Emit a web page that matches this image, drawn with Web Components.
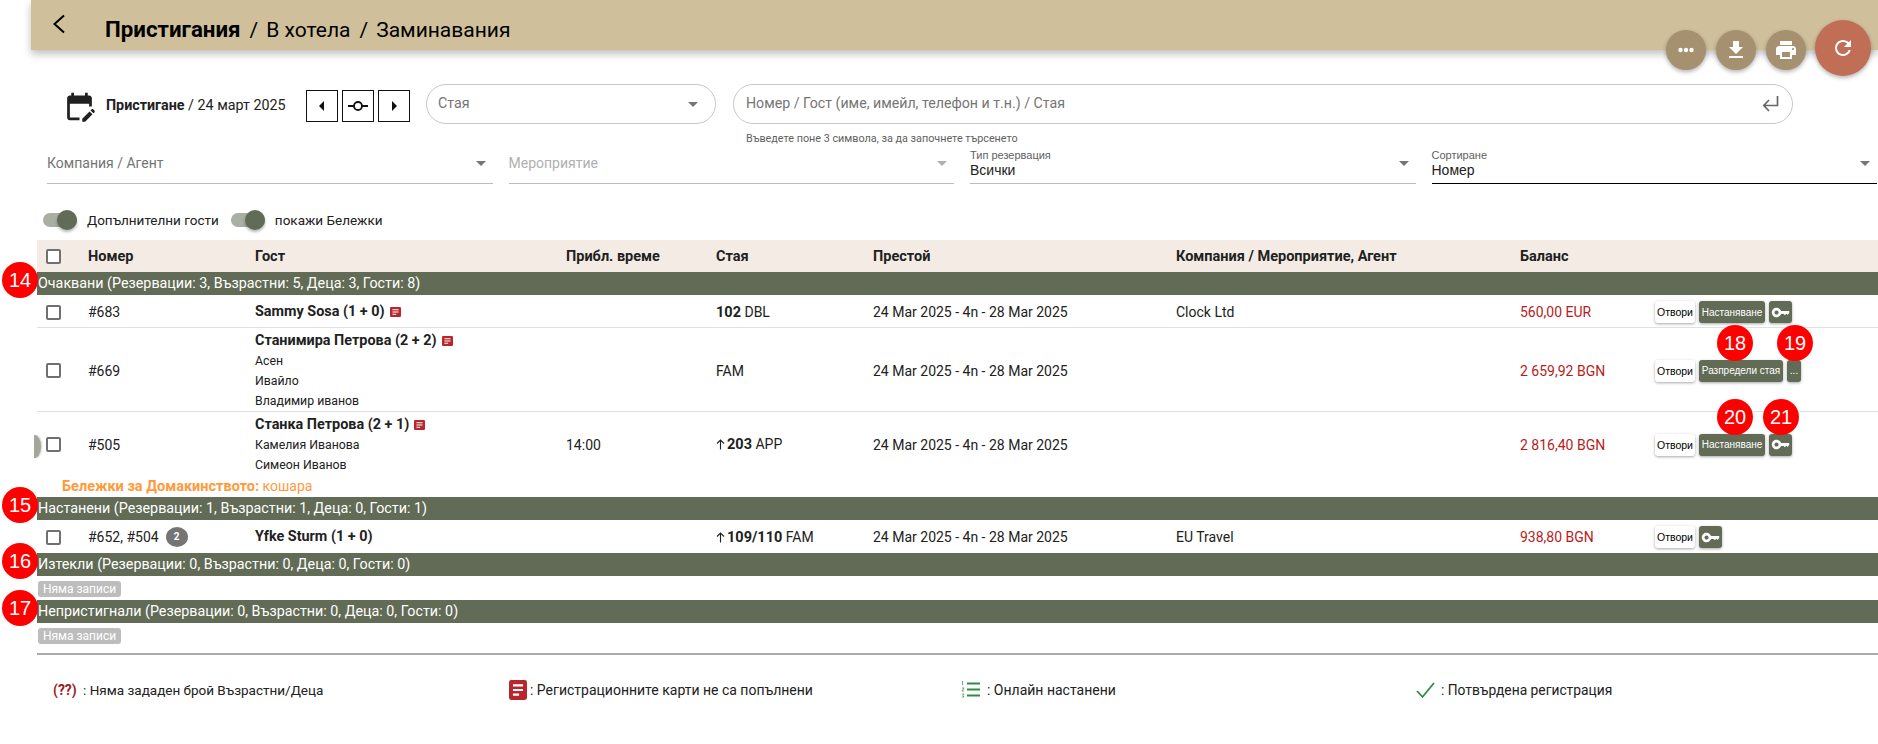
<!DOCTYPE html>
<html lang="bg">
<head>
<meta charset="utf-8">
<title>Пристигания</title>
<style>
	html, body { margin: 0; padding: 0; background: #fff; }
	body {
		font-family: Roboto, "Liberation Sans", sans-serif;
		font-size: 14px;
		color: #212121;
		overflow: hidden;
		width: 1878px;
		height: 744px;
		position: relative;
	}
</style>
</head>
<body>
<app-header>
	<b>Пристигания</b><i>/</i>В хотела<i>/</i>Заминавания
</app-header>

<fab-bar></fab-bar>

<filter-top></filter-top>

<filter-lines>
	<line-select placeholder="Компания / Агент"></line-select>
	<line-select placeholder="Мероприятие" disabled></line-select>
	<line-select label="Тип резервация" value="Всички"></line-select>
	<line-select label="Сортиране" value="Номер" active></line-select>
</filter-lines>

<toggle-bar>
	<toggle-switch>Допълнителни гости</toggle-switch>
	<toggle-switch>покажи Бележки</toggle-switch>
</toggle-bar>

<booking-table>
	<table-head></table-head>

	<group-row callout="14">Очаквани (Резервации: 3, Възрастни: 5, Деца: 3, Гости: 8)</group-row>
	<booking-row height="33" num="#683" name="Sammy Sosa (1 + 0)" reg room="<b>102</b> DBL" stay="24 Mar 2025 - 4n - 28 Mar 2025" company="Clock Ltd" balance="560,00 EUR" actions="open,checkin,key"></booking-row>
	<booking-row height="84" num="#669" name="Станимира Петрова (2 + 2)" reg guests="Асен|Ивайло|Владимир иванов" room="FAM" stay="24 Mar 2025 - 4n - 28 Mar 2025" balance="2 659,92 BGN" actions="open,assign,more" marks="18@80,19@140"></booking-row>
	<booking-row height="85" num="#505" name="Станка Петрова (2 + 1)" reg guests="Камелия Иванова|Симеон Иванов" time="14:00" arrow room="<b>203</b> APP" stay="24 Mar 2025 - 4n - 28 Mar 2025" balance="2 816,40 BGN" actions="open,checkin,key" marks="20@80,21@126" note="кошара" tab></booking-row>

	<group-row callout="15">Настанени (Резервации: 1, Възрастни: 1, Деца: 0, Гости: 1)</group-row>
	<booking-row height="33" flat num="#652, #504" count="2" name="Yfke Sturm (1 + 0)" arrow room="<b>109/110</b> FAM" stay="24 Mar 2025 - 4n - 28 Mar 2025" company="EU Travel" balance="938,80 BGN" actions="open,key"></booking-row>

	<group-row callout="16">Изтекли (Резервации: 0, Възрастни: 0, Деца: 0, Гости: 0)</group-row>
	<empty-row>Няма записи</empty-row>

	<group-row callout="17">Непристигнали (Резервации: 0, Възрастни: 0, Деца: 0, Гости: 0)</group-row>
	<empty-row>Няма записи</empty-row>
</booking-table>

<legend-bar></legend-bar>

<script>
const REG_ICON = (w, h) => `<svg width="${w}" height="${h}" viewBox="0 0 10 10" preserveAspectRatio="none" style="flex:none"><rect width="10" height="10" rx="1.2" fill="#b9252d"/><path d="M2.2 2.7h5.6M2.2 5h5.6M2.2 7.3h3.4" stroke="#fff" stroke-width="1.1"/></svg>`;
const KEY_ICON = `<svg width="19" height="19" viewBox="0 0 24 24" fill="#fff"><path d="M12.65 10C11.83 7.67 9.61 6 7 6c-3.31 0-6 2.69-6 6s2.69 6 6 6c2.61 0 4.83-1.67 5.65-4H16l1.5 1.6L19 14h1l1 1.2L23 12.6V10H12.65zM7 14.6c-1.43 0-2.6-1.17-2.6-2.6S5.57 9.400 7 9.400s2.6 1.170 2.600 2.600-1.170 2.600-2.600 2.600z"/></svg>`;

class AppHeader extends HTMLElement {
	constructor() {
		super();
		this.attachShadow({ mode: 'open' });
		this.shadowRoot.innerHTML = `
			<style>
				:host {
					display: flex;
					align-items: center;
					box-sizing: border-box;
					height: 50px;
					margin-left: 31px;
					padding: 7px 0 0 21px;
					background: #cfc09b;
					box-shadow: 0 4px 8px rgba(0,0,0,.25);
					color: #000;
					font-size: 21px;
				}
				svg { flex: none; margin: -9px 39px 0 0; }
				h1 { all: unset; display: block; white-space: nowrap; }
				::slotted(b) { font-weight: 700; font-size: 22.300px; }
				::slotted(i) { font-style: normal; margin: 0 8px 0 9px; }
			</style>
			<svg width="14" height="20" viewBox="0 0 14 20"><path d="M12 1.500 2.500 10 12 18.500" fill="none" stroke="#000" stroke-width="2"/></svg>
			<h1><slot></slot></h1>
		`;
	}
}

class FabBar extends HTMLElement {
	constructor() {
		super();
		this.attachShadow({ mode: 'open' });
		this.shadowRoot.innerHTML = `
			<style>
				:host {
					position: absolute;
					top: 20px;
					left: 1666px;
					display: flex;
					gap: 10px;
					align-items: flex-start;
					z-index: 3;
				}
				span {
					width: 40px;
					height: 40px;
					margin-top: 10px;
					border-radius: 50%;
					background: #a59070;
					box-shadow: 0 2px 4px rgba(0,0,0,.3);
					display: flex;
					align-items: center;
					justify-content: center;
				}
				span.big {
					width: 56px;
					height: 56px;
					margin: 0 0 0 -1px;
					background: #c06f56;
				}
				svg { fill: #fff; }
			</style>
			<span><svg width="24" height="24" viewBox="0 0 24 24"><circle cx="6.500" cy="12" r="2.200"/><circle cx="12" cy="12" r="2.200"/><circle cx="17.500" cy="12" r="2.200"/></svg></span>
			<span><svg width="24" height="24" viewBox="0 0 24 24"><path d="M19 9h-4V3H9v6H5l7 7 7-7zM5 18v2h14v-2H5z"/></svg></span>
			<span><svg width="24" height="24" viewBox="0 0 24 24"><path d="M19 8H5c-1.660 0-3 1.340-3 3v6h4v4h12v-4h4v-6c0-1.660-1.340-3-3-3zm-3 11H8v-5h8v5zm3-7c-.55 0-1-.45-1-1s.45-1 1-1 1 .45 1 1-.45 1-1 1zm-1-9H6v4h12V3z"/></svg></span>
			<span class="big"><svg width="24" height="24" viewBox="0 0 24 24"><path d="M17.650 6.350C16.200 4.900 14.210 4 12 4c-4.420 0-7.990 3.580-7.990 8s3.570 8 7.990 8c3.730 0 6.840-2.550 7.730-6h-2.080c-.82 2.330-3.040 4-5.650 4-3.310 0-6-2.690-6-6s2.690-6 6-6c1.660 0 3.140.69 4.220 1.780L13 11h7V4l-2.350 2.350z"/></svg></span>
		`;
	}
}

class FilterTop extends HTMLElement {
	constructor() {
		super();
		this.attachShadow({ mode: 'open' });
		this.shadowRoot.innerHTML = `
			<style>
				:host {
					display: flex;
					box-sizing: border-box;
					height: 96px;
					padding: 34px 0 0 63px;
					color: #212121;
				}
				.cal { width: 33px; height: 33px; margin: 6px 10px 0 0; fill: #212121; flex: none; }
				.date { font-size: 14.300px; line-height: 16px; margin: 13px 17px 0 0; white-space: nowrap; width: 183px; }
				.date b { font-weight: 700; }
				.nav { display: flex; gap: 4px; margin: 6px 16px 0 0; }
				.nav span {
					box-sizing: border-box;
					width: 32px;
					height: 32px;
					border: 1px solid #111;
					display: flex;
					align-items: center;
					justify-content: center;
				}
				.pill {
					box-sizing: border-box;
					height: 40px;
					border: 1px solid #c8c8c8;
					border-radius: 20px;
					display: flex;
					align-items: center;
					justify-content: space-between;
					font-size: 14.200px;
					color: #757575;
				}
				.room { width: 290px; padding: 0 17px 3px 11px; margin-right: 17px; }
				.caret { width: 0; height: 0; border: 5px solid transparent; border-top-color: #757575; border-bottom: 0; margin-top: 3px; }
				.search { width: 1060px; }
				.search .pill { padding: 0 13px 3px 12px; }
				.hint { font-size: 10.800px; line-height: 13px; margin: 8px 0 0 13px; color: #616161; }
			</style>
			<svg class="cal" viewBox="0 0 24 24"><path d="M5 10h14v2h2V6c0-1.100-.9-2-2-2h-1V2h-2v2H8V2H6v2H5c-1.110 0-1.990.9-1.990 2L3 20c0 1.100.89 2 2 2h7v-2H5V10zM22.840 16.280l-.71.71-2.120-2.120.71-.71c.39-.39 1.020-.39 1.410 0l.71.71c.39.39.39 1.020 0 1.410zM19.300 15.580l2.120 2.120-5.300 5.300H14v-2.120l5.300-5.300z"/></svg>
			<div class="date"><b>Пристигане</b> / 24 март 2025</div>
			<div class="nav">
				<span><svg width="8" height="12" viewBox="0 0 8 12"><path d="M6 1 1 6l5 5z" fill="#111"/></svg></span>
				<span><svg width="22" height="12" viewBox="0 0 22 12"><circle cx="11" cy="6" r="4" fill="none" stroke="#111" stroke-width="1.800"/><path d="M1 6h6M15 6h6" stroke="#111" stroke-width="1.800"/></svg></span>
				<span><svg width="8" height="12" viewBox="0 0 8 12"><path d="m2 1 5 5-5 5z" fill="#111"/></svg></span>
			</div>
			<div class="pill room">Стая<i class="caret"></i></div>
			<div class="search">
				<div class="pill">Номер / Гост (име, имейл, телефон и т.н.) / Стая
					<svg width="17" height="18" viewBox="0 0 17 18" style="margin-top:3px"><path d="M15.500 1v9.500H2M7 5 1.800 10.500 7 16" fill="none" stroke="#666" stroke-width="1.700"/></svg>
				</div>
				<div class="hint">Въведете поне 3 символа, за да започнете търсенето</div>
			</div>
		`;
	}
}

class FilterLines extends HTMLElement {
	constructor() {
		super();
		this.attachShadow({ mode: 'open' });
		this.shadowRoot.innerHTML = `
			<style>
				:host {
					display: grid;
					grid-template-columns: repeat(4, 445.500px);
					column-gap: 16px;
					padding-left: 47px;
					height: 38px;
				}
			</style>
			<slot></slot>
		`;
	}
}

class LineSelect extends HTMLElement {
	constructor() {
		super();
		this.attachShadow({ mode: 'open' });
	}

	connectedCallback() {
		const label = this.getAttribute('label');
		const text = label
			? `<div class="label">${label}</div><div class="value">${this.getAttribute('value')}</div>`
			: `<div class="ph">${this.getAttribute('placeholder')}</div>`;
		this.shadowRoot.innerHTML = `
			<style>
				:host {
					display: block;
					box-sizing: border-box;
					height: 38px;
					position: relative;
					border-bottom: 1px solid ${this.hasAttribute('active') ? '#000' : '#bdbdbd'};
				}
				.label { font-family: "Liberation Sans", sans-serif; font-size: 11px; line-height: 13px; color: #616161; padding-top: 3px; }
				.value { font-family: "Liberation Sans", sans-serif; font-size: 14px; line-height: 16px; color: #212121; }
				.ph { font-size: 14px; line-height: 16px; padding-top: 9px; color: ${this.hasAttribute('disabled') ? '#b0b0b0' : '#757575'}; }
				i { position: absolute; right: 7px; top: 15px; width: 0; height: 0; border: 5px solid transparent; border-top-color: ${this.hasAttribute('disabled') ? '#b0b0b0' : '#757575'}; border-bottom: 0; }
			</style>
			${text}<i></i>
		`;
	}
}

class ToggleBar extends HTMLElement {
	constructor() {
		super();
		this.attachShadow({ mode: 'open' });
		this.shadowRoot.innerHTML = `
			<style>
				:host {
					display: flex;
					box-sizing: border-box;
					height: 56px;
					padding: 24px 0 0 43px;
					gap: 12px;
				}
			</style>
			<slot></slot>
		`;
	}
}

class ToggleSwitch extends HTMLElement {
	constructor() {
		super();
		this.attachShadow({ mode: 'open' });
		this.shadowRoot.innerHTML = `
			<style>
				:host { display: flex; align-items: center; gap: 10px; height: 24px; font-size: 13.500px; color: #212121; }
				.track { position: relative; width: 34px; height: 14px; border-radius: 7px; background: #a9afa2; }
				.thumb { position: absolute; right: 0; top: -3px; width: 20px; height: 20px; border-radius: 50%; background: #626b55; box-shadow: 0 2px 3px rgba(0,0,0,.3); }
			</style>
			<div class="track"><div class="thumb"></div></div>
			<slot></slot>
		`;
	}
}

class BookingTable extends HTMLElement {
	constructor() {
		super();
		this.attachShadow({ mode: 'open' });
		this.shadowRoot.innerHTML = `
			<style>
				:host {
					display: block;
					margin-left: 37px;
					--cols: 51px 167px 311px 150px 157px 303px 344px 135px 1fr;
				}
				.end { height: 6px; border-bottom: 2px solid #ababab; }
			</style>
			<slot></slot>
			<div class="end"></div>
		`;
	}
}

class CheckBox extends HTMLElement {
	constructor() {
		super();
		this.attachShadow({ mode: 'open' });
		this.shadowRoot.innerHTML = `
			<style>
				:host { display: block; box-sizing: border-box; width: 15px; height: 15px; margin-left: 9px; border: 2px solid #707070; border-radius: 2px; background: #fff; }
			</style>
		`;
	}
}

class TableHead extends HTMLElement {
	constructor() {
		super();
		this.attachShadow({ mode: 'open' });
		this.shadowRoot.innerHTML = `
			<style>
				:host {
					display: grid;
					grid-template-columns: var(--cols);
					align-items: center;
					height: 32px;
					background: #f4ece4;
					font-size: 14.500px;
					font-weight: 700;
					color: #212121;
				}
			</style>
			<check-box></check-box>
			<div>Номер</div><div>Гост</div><div>Прибл. време</div><div>Стая</div><div>Престой</div><div>Компания / Мероприятие, Агент</div><div>Баланс</div><div></div>
		`;
	}
}

class CallOut extends HTMLElement {
	constructor() {
		super();
		this.attachShadow({ mode: 'open' });
		this.shadowRoot.innerHTML = `
			<style>
				:host {
					position: absolute;
					width: 36px;
					height: 36px;
					border-radius: 50%;
					background: #f00;
					color: #fff;
					font-family: "Liberation Sans", sans-serif;
					font-size: 20px;
					font-weight: 400;
					line-height: 36px;
					text-align: center;
					z-index: 2;
				}
			</style>
			<slot></slot>
		`;
	}
}

class GroupRow extends HTMLElement {
	constructor() {
		super();
		this.attachShadow({ mode: 'open' });
		this.shadowRoot.innerHTML = `
			<style>
				:host {
					display: block;
					position: relative;
					height: 23px;
					background: #626b55;
					color: #fff;
					font-size: 14.300px;
					line-height: 23px;
					padding-left: 1px;
				}
				call-out { left: -35px; top: -10px; }
			</style>
			<call-out>${this.getAttribute('callout')}</call-out>
			<slot></slot>
		`;
	}
}

class ActionBtn extends HTMLElement {
	constructor() {
		super();
		this.attachShadow({ mode: 'open' });
		const light = this.hasAttribute('light');
		this.shadowRoot.innerHTML = `
			<style>
				:host {
					display: flex;
					align-items: center;
					justify-content: center;
					box-sizing: border-box;
					height: 22px;
					border-radius: 3px;
					font-family: "Liberation Sans", sans-serif;
					font-size: ${light ? 10.500 : 10}px;
					white-space: nowrap;
					background: ${light ? '#fff' : '#626b55'};
					color: ${light ? '#000' : '#fff'};
					box-shadow: 0 1px 3px rgba(0,0,0,.35);
				}
			</style>
			<slot></slot>
		`;
	}
}

class BookingRow extends HTMLElement {
	constructor() {
		super();
		this.attachShadow({ mode: 'open' });
	}

	get actions() {
		const btn = {
			open: `<action-btn light style="width:40px">Отвори</action-btn>`,
			checkin: `<action-btn style="width:66px">Настаняване</action-btn>`,
			assign: `<action-btn style="width:84px">Разпредели стая</action-btn>`,
			more: `<action-btn style="width:14px">...</action-btn>`,
			key: `<action-btn style="width:23px">${KEY_ICON}</action-btn>`,
		};
		return this.getAttribute('actions').split(',').map(a => btn[a]).join('');
	}

	get marks() {
		const marks = this.getAttribute('marks');
		if (!marks)
			return '';
		return marks.split(',').map(m => {
			const [n, x] = m.split('@');
			return `<call-out style="left:${x - 18}px;top:-35px">${n}</call-out>`;
		}).join('');
	}

	connectedCallback() {
		const a = n => this.getAttribute(n) || '';
		const note = this.hasAttribute('note');
		const guests = a('guests') ? a('guests').split('|').map(g => `<div class="sub">${g}</div>`).join('') : '';
		const count = a('count') ? `<span class="count">${a('count')}</span>` : '';
		const arrow = this.hasAttribute('arrow')
			? `<svg width="9" height="11" viewBox="0 0 9 11" style="margin-right:2px"><path d="M4.500 10.500V1M1 4.500 4.500 1 8 4.500" fill="none" stroke="#212121" stroke-width="1.100"/></svg>` : '';
		const reg = this.hasAttribute('reg') ? REG_ICON(11, 10) : '';
		this.shadowRoot.innerHTML = `
			<style>
				:host {
					display: block;
					position: relative;
					box-sizing: border-box;
					height: ${a('height')}px;
					font-size: 14px;
					color: #212121;
					${this.hasAttribute('flat') || note ? '' : 'border-bottom: 1px solid #e0e0e0;'}
				}
				.grid {
					display: grid;
					grid-template-columns: var(--cols);
					align-items: center;
					box-sizing: border-box;
					height: ${note ? 65 : a('height') - 1}px;
					padding-top: ${note ? 0 : 2}px;
				}
				.name { display: flex; align-items: center; gap: 5px; font-size: 14.400px; font-weight: 700; white-space: nowrap; line-height: 20px; }
				.sub { line-height: 20px; font-size: 12.300px; }
				.num { display: flex; align-items: center; }
				.count { width: 22px; height: 20px; margin-left: 7px; border-radius: 50%; background: #757575; color: #fff; font-size: 10px; font-weight: 700; line-height: 20px; text-align: center; }
				.room { display: flex; align-items: center; white-space: pre; }
				.room b { font-weight: 700; font-size: 14.500px; }
				.bal { color: #b71c1c; }
				.acts { position: relative; display: flex; gap: 4px; }
				.note { font-size: 14px; line-height: 18px; padding-left: 25px; color: #ff9a3c; }
				.note b { font-weight: 700; font-size: 14.500px; }
				.tab { position: absolute; left: -3px; top: 23px; width: 7px; height: 23px; border-radius: 0 7px 7px 0 / 0 12px 12px 0; background: #a2a79a; box-shadow: 1px 0 2px rgba(0,0,0,.2); }
			</style>
			${this.hasAttribute('tab') ? '<div class="tab"></div>' : ''}
			<div class="grid">
				<check-box></check-box>
				<div class="num">${a('num')}${count}</div>
				<div><div class="name">${a('name')}${reg}</div>${guests}</div>
				<div>${a('time')}</div>
				<div class="room">${arrow}<span>${a('room')}</span></div>
				<div>${a('stay')}</div>
				<div>${a('company')}</div>
				<div class="bal">${a('balance')}</div>
				<div class="acts">${this.actions}${this.marks}</div>
			</div>
			${a('note') ? `<div class="note"><b>Бележки за Домакинството:</b> ${a('note')}</div>` : ''}
		`;
	}
}

class EmptyRow extends HTMLElement {
	constructor() {
		super();
		this.attachShadow({ mode: 'open' });
		this.shadowRoot.innerHTML = `
			<style>
				:host { display: block; box-sizing: border-box; height: 24px; padding: 5px 0 0 1px; }
				span { display: block; width: 83px; height: 16px; border-radius: 3px; background: #bdbdbd; color: #fff; font-size: 12px; line-height: 16px; text-align: center; }
			</style>
			<span><slot></slot></span>
		`;
	}
}

class LegendBar extends HTMLElement {
	constructor() {
		super();
		this.attachShadow({ mode: 'open' });
		this.shadowRoot.innerHTML = `
			<style>
				:host {
					display: grid;
					grid-template-columns: 456px 452px 455px 1fr;
					box-sizing: border-box;
					padding: 23px 0 0 53px;
					font-size: 14px;
					color: #212121;
				}
				div { display: flex; align-items: center; gap: 3px; height: 24px; white-space: nowrap; }
				.first { font-size: 13.500px; }
				b { color: #9c1c1c; font-weight: 700; font-size: 14px; }
			</style>
			<div class="first"><b>(??)</b>&nbsp;: Няма зададен брой Възрастни/Деца</div>
			<div>${REG_ICON(18, 20)}: Регистрационните карти не са попълнени</div>
			<div><svg width="20" height="20" viewBox="0 0 20 20" style="margin-right:3px"><path d="M6 3.500h13M6 9.500h13M6 15.500h13" stroke="#2e8b45" stroke-width="2"/><path d="M1.500 1v4M1 8h2l-2 3h2M1 14h2l-1 1.500 1 1.500H1" fill="none" stroke="#2e8b45" stroke-width=".7"/></svg>: Онлайн настанени</div>
			<div style="font-size:13.800px"><svg width="20" height="20" viewBox="0 0 20 20" style="margin-right:2px"><path d="M1 11l5.500 6L18 3" fill="none" stroke="#2e8b45" stroke-width="1.800"/></svg>: Потвърдена регистрация</div>
		`;
	}
}

customElements.define('app-header', AppHeader);
customElements.define('fab-bar', FabBar);
customElements.define('filter-top', FilterTop);
customElements.define('filter-lines', FilterLines);
customElements.define('line-select', LineSelect);
customElements.define('toggle-bar', ToggleBar);
customElements.define('toggle-switch', ToggleSwitch);
customElements.define('booking-table', BookingTable);
customElements.define('check-box', CheckBox);
customElements.define('table-head', TableHead);
customElements.define('call-out', CallOut);
customElements.define('group-row', GroupRow);
customElements.define('action-btn', ActionBtn);
customElements.define('booking-row', BookingRow);
customElements.define('empty-row', EmptyRow);
customElements.define('legend-bar', LegendBar);
</script>
</body>
</html>
